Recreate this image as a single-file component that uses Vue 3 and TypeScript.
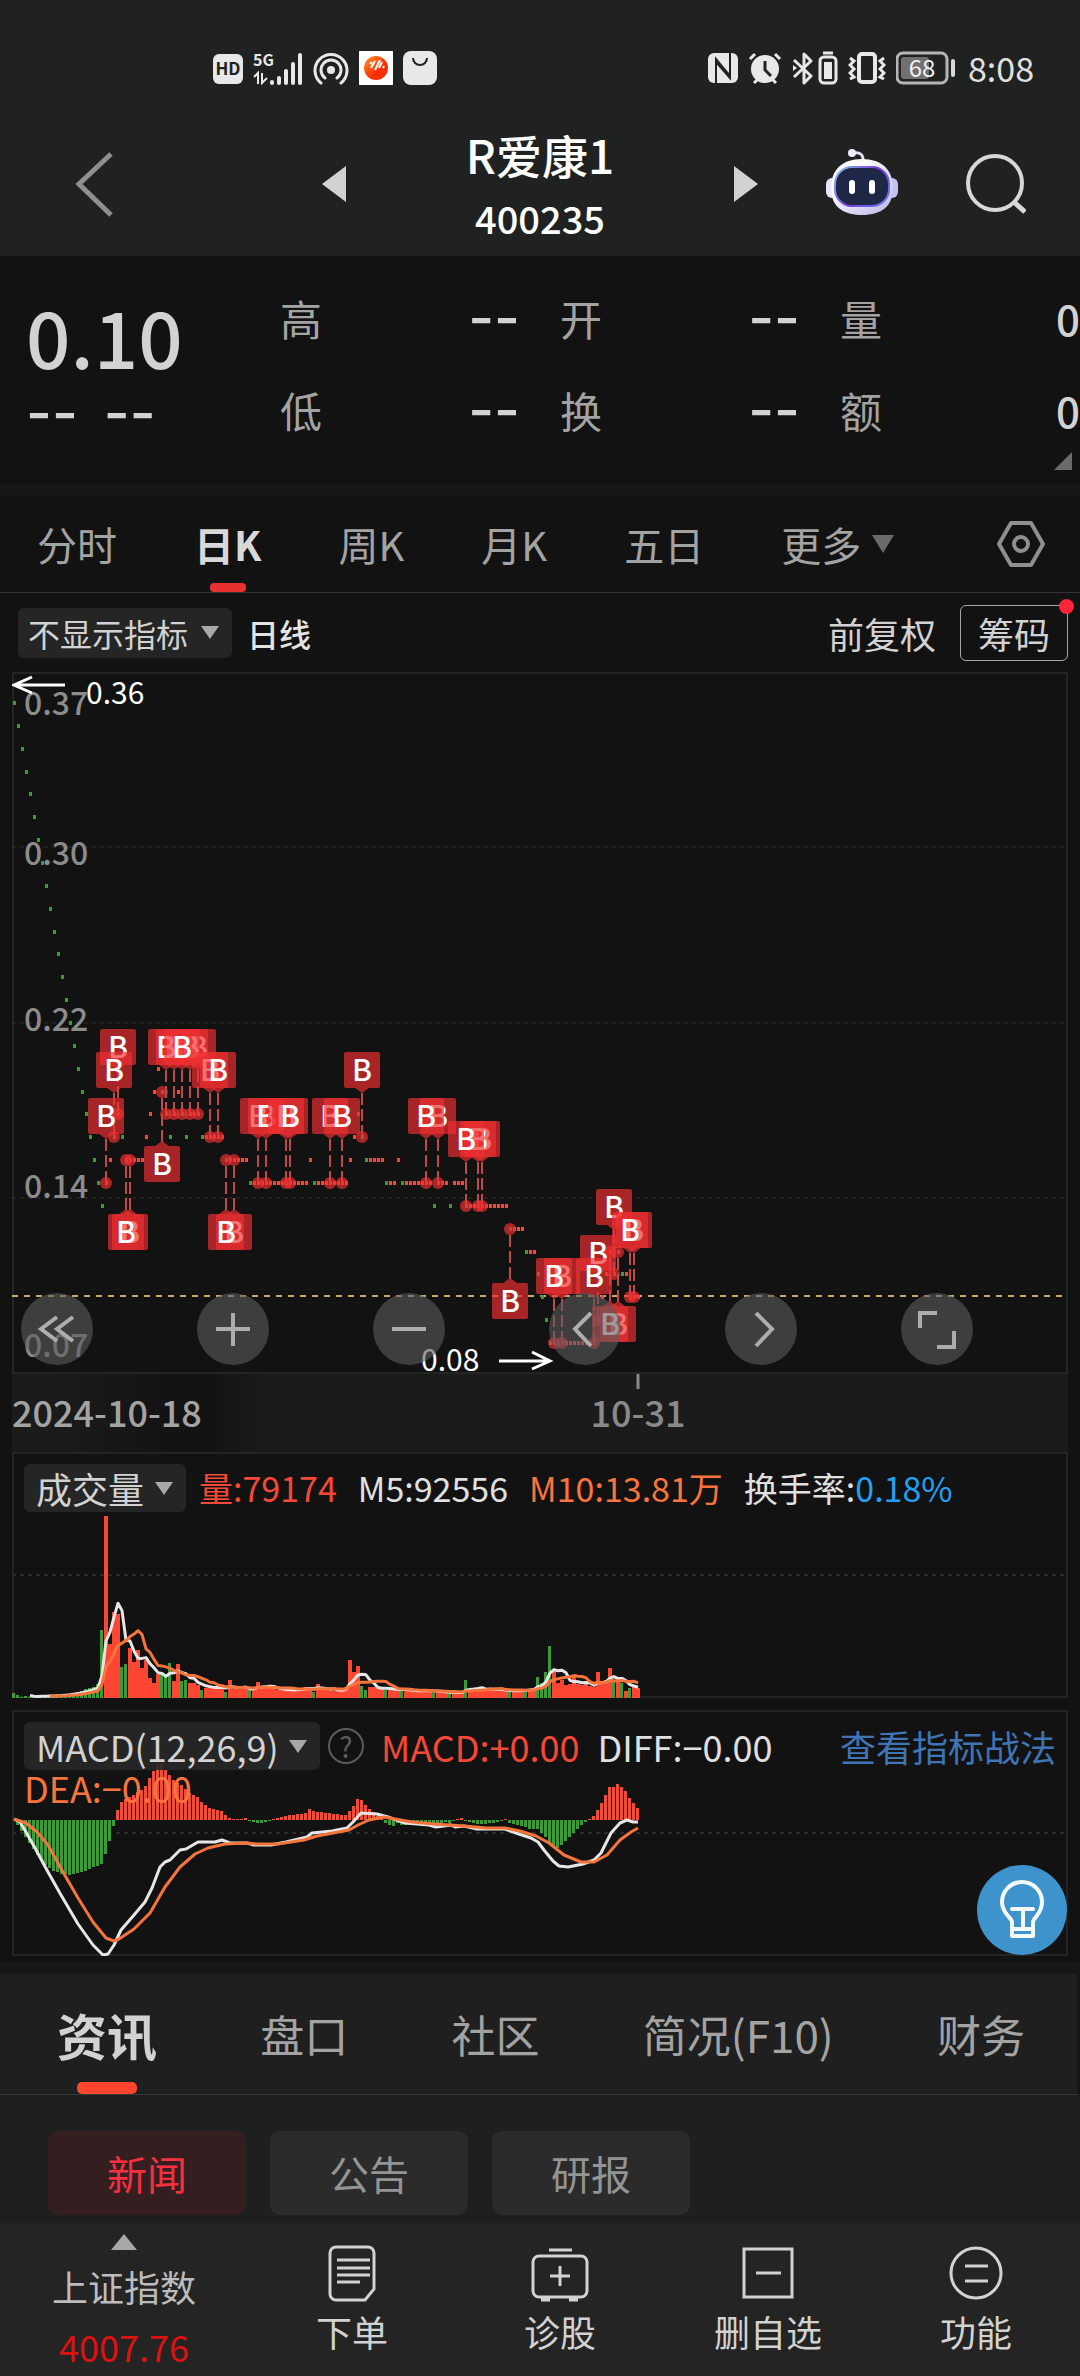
<script setup lang="ts">
import { ref } from 'vue'

interface Marker { index: number; above: boolean }

const quotes = [
  { label: '高', value: '--' }, { label: '开', value: '--' }, { label: '量', value: '0' },
  { label: '低', value: '--' }, { label: '换', value: '--' }, { label: '额', value: '0' },
]
const periods = ['分时', '日K', '周K', '月K', '五日']
const period = ref('日K')
const sections = ['资讯', '盘口', '社区', '简况(F10)', '财务']
const section = ref('资讯')
const feeds = ['新闻', '公告', '研报']
const feed = ref('新闻')

// Closing prices in cents as [price, repeat] runs
const runs: [number, number][] = [
  [36, 1], [35, 1], [34, 1], [33, 1], [32, 1], [31, 1], [30, 1], [29, 1], [28, 1], [27, 1], [26, 1], [25, 1],
  [24, 1], [23, 1], [22, 1], [21, 1], [20, 1], [19, 1], [18, 1], [17, 1], [16, 1], [15, 1], [14, 1], [15, 1],
  [16, 1], [17, 1], [18, 1], [17, 1], [16, 5], [17, 1], [18, 1], [19, 1], [20, 1], [19, 1], [18, 1], [17, 1],
  [18, 1], [19, 1], [18, 1], [17, 1], [18, 3], [17, 6], [16, 6], [15, 15], [16, 1], [15, 9], [16, 1], [17, 1],
  [18, 1], [17, 1], [16, 5], [15, 3], [16, 1], [15, 8], [14, 1], [15, 3], [14, 1], [15, 3], [14, 11], [13, 4],
  [12, 3], [11, 1], [10, 1], [9, 1], [8, 12], [9, 1], [10, 1], [11, 1], [12, 1], [11, 1], [12, 1], [11, 2], [10, 3],
]
const prices: number[] = runs.flatMap(([p, n]) => Array<number>(n).fill(p))
const falling = (i: number) => i === 0 || prices[i] < prices[i - 1]
const tone = (i: number) => (falling(i) ? '#3c9b38' : '#ff4632')
const xAt = (i: number) => 2 + 4 * i
const yAt = (p: number) => Math.round(671 - 22.86 * (p - 8))

// Later entries are painted over earlier ones
const markers: Marker[] = [
  [26, 1], [25, 1], [23, 1], [37, 0], [29, 0], [28, 0],
  [46, 1], [44, 1], [40, 1], [38, 1], [42, 1], [49, 1], [51, 1], [55, 0], [53, 0],
  [61, 1], [63, 1], [68, 1], [69, 1], [79, 1], [82, 1], [87, 1],
  [106, 1], [103, 1], [117, 1], [116, 1], [113, 1], [124, 0],
  [150, 1], [155, 1], [154, 1], [146, 1], [137, 1], [135, 1], [145, 1], [151, 0], [149, 0],
].map(([index, up]) => ({ index, above: up === 1 }))

const volumes = [
  5, 3, 1, 2, 1, 2, 2, 2, 2, 2, 2, 3, 3, 4, 4, 5, 6, 7, 9, 10, 11, 14, 68, 182, 54, 86, 84, 31, 34, 50, 36, 48, 30,
  38, 20, 15, 24, 26, 24, 35, 17, 34, 17, 18, 15, 15, 13, 8, 10, 11, 11, 12, 10, 6, 18, 9, 9, 10, 9, 8, 10, 16, 12,
  11, 10, 9, 8, 8, 8, 8, 8, 9, 10, 11, 10, 6, 14, 9, 8, 8, 7, 8, 8, 11, 38, 26, 32, 12, 8, 11, 11, 10, 9, 8, 9, 9,
  8, 8, 8, 7, 6, 7, 8, 8, 7, 5, 7, 6, 6, 4, 7, 5, 5, 18, 8, 9, 8, 9, 10, 9, 8, 8, 8, 7, 6, 7, 8, 9, 7, 9, 10, 21,
  15, 26, 52, 28, 15, 18, 13, 14, 22, 14, 13, 14, 12, 11, 26, 14, 18, 30, 19, 16, 15, 7, 10, 12, 10,
]
function average(span: number): string {
  const points: string[] = []
  for (let i = span - 1; i < volumes.length; i++) {
    const sum = volumes.slice(i - span + 1, i + 1).reduce((a, b) => a + b, 0)
    points.push(`${xAt(i)},${(246 - sum / span).toFixed(1)}`)
  }
  return points.join(' ')
}
const volumeMa5 = average(5)
const volumeMa10 = average(10)

const macd = [
  0, -5, -11, -17, -23, -29, -35, -40, -45, -48, -51, -52, -54, -54, -55, -54, -53, -52, -51, -49, -47, -46, -44,
  -34, -21, -6, 10, 18, 21, 23, 25, 28, 30, 34, 42, 49, 56, 56, 50, 45, 40, 37, 35, 31, 27, 25, 23, 18, 15, 12, 11,
  10, 9, 5, 2, 1, 1, 1, 2, -1, -2, -3, -3, -2, -1, 1, 2, 3, 4, 5, 5, 6, 6, 7, 11, 9, 8, 8, 7, 7, 6, 6, 5, 5, 9, 14,
  21, 20, 15, 11, 8, 4, 1, -3, -5, -6, -3, -5, -5, -5, -4, -5, -6, -5, -5, -4, -4, -3, -2, -3, -1, 1, 2, -1, -2,
  -3, -4, -4, -4, -3, -3, -2, -1, 1, -3, -4, -5, -6, -7, -9, -9, -9, -13, -17, -23, -27, -28, -25, -21, -17, -13,
  -9, -5, -2, 1, 4, 10, 17, 25, 33, 33, 36, 33, 29, 22, 17, 12,
]
const diffLine =
  '2,109 8,112 14,122 23,138 36,162 49,185 66,214 81,235 91,245 96,244 102,235 109,220 122,205 133,192 140,178 148,157 153,152 158,150 168,140 174,139 186,132 203,132 210,130 218,133 235,133 242,135 259,135 274,132 295,127 300,123 320,121 335,118 341,112 349,103 365,104 376,107 393,113 417,115 424,117 439,115 443,117 452,116 465,119 493,119 504,123 519,128 526,132 532,140 541,151 547,156 556,157 571,154 582,150 589,143 599,123 608,113 615,110 621,112 626,112'
const deaLine =
  '2,109 14,113 25,122 36,135 51,162 66,188 81,212 94,228 102,231 107,229 122,219 138,203 153,177 168,157 183,144 196,138 213,134 235,133 244,134 266,134 292,130 305,126 337,120 346,115 357,110 372,107 383,109 400,112 422,114 452,116 474,118 493,118 508,121 524,126 537,133 552,145 569,152 582,152 595,145 608,130 619,122 626,118'

const gridLabels = [
  { y: 43, text: '0.37' }, { y: 193, text: '0.30' }, { y: 359, text: '0.22' }, { y: 526, text: '0.14' }, { y: 685, text: '0.07' },
]
const tools = [
  { name: '最早', path: 'M36 24 20 36l16 12M52 24 36 36l16 12' },
  { name: '放大', path: 'M36 20v33M19 36h34' },
  { name: '缩小', path: 'M19 36h34' },
  { name: '向左', path: 'M42 20 26 36l16 17' },
  { name: '向右', path: 'M31 20l16 16-16 17' },
  { name: '全屏', path: 'M19 35V20h17M36 54h17V38' },
]
const actions = [
  { name: '下单', path: 'M14 3h32a6 6 0 0 1 6 6v36l-9 11H14a6 6 0 0 1-6-6V9a6 6 0 0 1 6-6ZM15 16h33M15 24h33M15 31h33M15 38h23' },
  { name: '诊股', path: 'M19 6h23M9 12h42a6 6 0 0 1 6 6v29a6 6 0 0 1-6 6H9a6 6 0 0 1-6-6V18a6 6 0 0 1 6-6ZM30 22v20M20 32h20M11 56h9M39 56h9' },
  { name: '删自选', path: 'M6 5h48v48H6ZM18 29h25' },
  { name: '功能', path: 'M30 4a25 25 0 1 1 0 50a25 25 0 1 1 0-50ZM19 22h23M19 37h23' },
]
</script>

<template>
  <div class="page">
    <header class="top">
      <div class="status">
        <div class="status-side">
          <svg width="30" height="34" viewBox="0 0 30 34">
            <rect y="3" width="30" height="30" rx="6" fill="#e8e8e8" />
            <text x="15" y="24" class="hd" text-anchor="middle">HD</text>
          </svg>
          <svg width="50" height="34" viewBox="0 0 50 34">
            <text x="0" y="15" class="net">5G</text>
            <path d="M1 26l4-4v11M9 22v10l5-5" fill="none" stroke="#e8e8e8" stroke-width="2" />
            <path d="M19 31v1M26 27v5M33 20v12M40 13v19M47 4v28" stroke="#e8e8e8" stroke-width="4" stroke-linecap="round" />
          </svg>
          <svg width="36" height="34" viewBox="0 0 36 34" fill="none" stroke="#e8e8e8" stroke-width="3">
            <circle cx="18" cy="19" r="4" fill="#e8e8e8" stroke="none" />
            <path d="M12 27a10 10 0 1 1 12 0M8 32a16 16 0 1 1 20 0" stroke-linecap="round" />
          </svg>
          <svg width="34" height="34" viewBox="0 0 34 34">
            <defs>
              <linearGradient id="sun" x1="0" y1="0" x2="1" y2="1">
                <stop offset="0" stop-color="#ff9a1f" /><stop offset="0.6" stop-color="#fa2d06" />
              </linearGradient>
            </defs>
            <rect width="34" height="34" fill="#fff" />
            <circle cx="17" cy="17" r="12" fill="url(#sun)" />
            <path d="M11 13l2-2M12 17l4-7M16 19l5-10M20 17l3-6M24 17l1-2" stroke="#fff" stroke-width="2" />
          </svg>
          <svg width="34" height="34" viewBox="0 0 34 34">
            <rect width="34" height="34" rx="8" fill="#e8e8e8" />
            <path d="M10 7a7 7 0 0 0 14 0" fill="none" stroke="#202221" stroke-width="2" />
          </svg>
        </div>
        <div class="status-side">
          <svg width="30" height="34" viewBox="0 0 30 34">
            <rect y="2" width="30" height="30" rx="6" fill="#e8e8e8" />
            <path d="M8 32V8l14 17M22 2v25L8 11" fill="none" stroke="#202221" stroke-width="2" />
          </svg>
          <svg width="34" height="34" viewBox="0 0 34 34">
            <circle cx="17" cy="18" r="14" fill="#e8e8e8" />
            <path d="M2 8l5-5M32 8l-5-5M6 32l4-4M28 32l-4-4" stroke="#e8e8e8" stroke-width="3" />
            <path d="M17 10v9l6 6" fill="none" stroke="#202221" stroke-width="3" />
          </svg>
          <svg width="46" height="34" viewBox="0 0 46 34" fill="none" stroke="#e8e8e8" stroke-width="3">
            <path d="M2 9l17 16-7 7V3l7 7L2 26" stroke-linejoin="round" />
            <path d="M1 14l4 3-4 3Z" fill="#e8e8e8" stroke="none" />
            <rect x="28" y="6" width="16" height="26" rx="4" />
            <path d="M31 2h10" />
            <rect x="32" y="11" width="8" height="17" fill="#e8e8e8" stroke="none" />
          </svg>
          <svg width="38" height="34" viewBox="0 0 38 34" fill="none" stroke="#e8e8e8">
            <rect x="11" y="3" width="16" height="28" rx="3" stroke-width="4" />
            <path d="M2 7l4 3-4 4 4 4-4 4 4 4-4 2M36 7l-4 3 4 4-4 4 4 4-4 4 4 2" stroke-width="3" />
          </svg>
          <svg width="60" height="34" viewBox="0 0 60 34">
            <rect x="1" y="2" width="50" height="30" rx="6" fill="none" stroke="#b5b5b5" stroke-width="3" />
            <rect x="5" y="6" width="28" height="22" rx="3" fill="#707070" />
            <path d="M57 10v14" stroke="#d8d8d8" stroke-width="4" stroke-linecap="round" />
            <text x="26" y="26" class="charge" text-anchor="middle">68</text>
          </svg>
          <span class="clock">8:08</span>
        </div>
      </div>
      <div class="bar">
        <div class="bar-left">
          <button aria-label="返回"><svg width="48" height="72" viewBox="0 0 48 72"><path d="M40 6 8 36l32 31" fill="none" stroke="#8f8f8f" stroke-width="5" /></svg></button>
        </div>
        <div class="bar-mid">
          <button aria-label="上一只"><svg width="24" height="36" viewBox="0 0 24 36"><path d="M24 0v36L0 18Z" fill="#d2d2d2" /></svg></button>
          <div class="titles">
            <h1>R爱康1</h1>
            <p>400235</p>
          </div>
          <button aria-label="下一只"><svg width="24" height="36" viewBox="0 0 24 36"><path d="M0 0v36l24-18Z" fill="#d2d2d2" /></svg></button>
        </div>
        <div class="bar-right">
          <button aria-label="智能助手">
            <svg width="72" height="72" viewBox="0 0 72 72">
              <defs>
                <linearGradient id="shell" x1="0" y1="0" x2="1" y2="1">
                  <stop offset="0.3" stop-color="#fbfbff" /><stop offset="1" stop-color="#b9b4e6" />
                </linearGradient>
                <linearGradient id="rim" x1="0" y1="0" x2="1" y2="0.6">
                  <stop offset="0" stop-color="#7fc8f0" /><stop offset="0.6" stop-color="#7a3bd0" /><stop offset="1" stop-color="#6b6bf0" />
                </linearGradient>
              </defs>
              <rect x="0" y="30" width="12" height="20" rx="6" fill="#e6e4fa" />
              <rect x="60" y="30" width="12" height="20" rx="6" fill="#c3bfee" />
              <path d="M27 5q11-2 10 9" fill="none" stroke="#e2e0f7" stroke-width="3" />
              <circle cx="26" cy="5" r="4" fill="#eceafb" />
              <path d="M36 11c20 0 31 11 31 29s-11 27-31 27S5 58 5 40s11-29 31-29Z" fill="url(#shell)" />
              <rect x="9" y="19" width="54" height="39" rx="17" fill="#1f2747" stroke="url(#rim)" stroke-width="2" />
              <path d="M26 35v8M46 35v8" stroke="#fff" stroke-width="6" stroke-linecap="round" />
            </svg>
          </button>
          <button aria-label="搜索">
            <svg width="60" height="60" viewBox="0 0 60 60" fill="none" stroke="#d8d8d8" stroke-width="4">
              <circle cx="29" cy="29" r="27" /><path d="M48 48l11 10" stroke-width="5" />
            </svg>
          </button>
        </div>
      </div>
    </header>

    <section class="quote">
      <div class="price">
        <strong>0.10</strong>
        <p class="dash"><span>--</span><span>--</span></p>
      </div>
      <dl class="cells">
        <div v-for="q in quotes" :key="q.label">
          <dt>{{ q.label }}</dt>
          <dd :class="{ dash: q.value === '--' }">{{ q.value }}</dd>
        </div>
      </dl>
      <svg class="corner" width="18" height="18" viewBox="0 0 18 18"><path d="M18 0v18H0Z" fill="#6a6a6a" /></svg>
    </section>

    <nav class="periods">
      <button v-for="p in periods" :key="p" :class="{ on: p === period }" @click="period = p">{{ p }}</button>
      <button>更多<svg width="24" height="18" viewBox="0 0 24 18"><path d="M1 0h22L12 18Z" fill="#6a6a6a" /></svg></button>
      <button class="gear" aria-label="图表设置">
        <svg width="48" height="48" viewBox="0 0 48 48" fill="none" stroke="#8f8f8f" stroke-width="4">
          <path d="M14 3h20l12 21-12 21H14L2 24Z" stroke-linejoin="round" /><circle cx="24" cy="24" r="7" />
        </svg>
      </button>
    </nav>

    <section class="options">
      <label class="pick small">
        <select aria-label="主图指标"><option>不显示指标</option></select>
        <svg width="18" height="13" viewBox="0 0 18 13"><path d="M0 0h18L9 13Z" fill="#a8a8a8" /></svg>
      </label>
      <span class="line-name">日线</span>
      <button class="adjust">前复权</button>
      <button class="chips-btn">筹码<i></i></button>
    </section>

    <section class="charts">
      <div class="stack">
        <svg class="plot" viewBox="0 0 1056 702">
          <rect x="1" y="1" width="1054" height="700" fill="none" stroke="#242424" stroke-width="2" />
          <path d="M0 175H1056M0 351H1056M0 526H1056" stroke="#2e2e2e" stroke-width="1" stroke-dasharray="4 4" />
          <path d="M0 624H1056" stroke="#c9a868" stroke-width="2" stroke-dasharray="6 6" />
          <text v-for="g in gridLabels" :key="g.text" x="12" :y="g.y" class="axis">{{ g.text }}</text>
          <rect v-for="(p, i) in prices" :key="i" :x="xAt(i) - 1" :y="yAt(p) - 2" width="3" height="4" :fill="tone(i)" />
          <g v-for="m in markers" :key="'s' + m.index" :transform="`translate(${xAt(m.index)} ${yAt(prices[m.index])})`">
            <path :d="m.above ? 'M0 -44V0' : 'M0 50V0'" stroke="#c2494a" stroke-width="2" stroke-dasharray="12 4" />
            <circle r="6" class="flag" />
          </g>
          <g v-for="m in markers" :key="'f' + m.index" :transform="`translate(${xAt(m.index)} ${yAt(prices[m.index]) + (m.above ? -85 : 54)})`">
            <path v-if="m.above" class="flag" d="M-16 0h32a2 2 0 0 1 2 2v32a2 2 0 0 1-2 2H7L0 41l-7-5h-9a2 2 0 0 1-2-2V2a2 2 0 0 1 2-2Z" />
            <path v-else class="flag" d="M-16 0h9l7-5 7 5h9a2 2 0 0 1 2 2v32a2 2 0 0 1-2 2h-32a2 2 0 0 1-2-2V2a2 2 0 0 1 2-2Z" />
            <text y="29" class="b" text-anchor="middle">B</text>
          </g>
          <path d="M53 13H2M20 5 2 13l18 8M487 689h50M520 680l18 9-18 8" fill="none" stroke="#fff" stroke-width="3" />
          <text x="74" y="32" class="extreme">0.36</text>
          <text x="409" y="699" class="extreme">0.08</text>
        </svg>
        <div class="tools">
          <button v-for="t in tools" :key="t.name" :aria-label="t.name">
            <svg width="72" height="72" viewBox="0 0 72 72"><path :d="t.path" fill="none" stroke="#adadad" stroke-width="4" /></svg>
          </button>
        </div>
      </div>

      <svg class="plot dates" viewBox="0 0 1056 78">
        <path d="M626 0v15" stroke="#8a8a8a" stroke-width="3" />
        <text x="0" y="53" class="date first">2024-10-18</text>
        <text x="626" y="53" class="date" text-anchor="middle">10-31</text>
      </svg>

      <div class="stack">
        <svg class="plot" viewBox="0 0 1056 246">
          <rect x="1" y="1" width="1054" height="244" fill="none" stroke="#242424" stroke-width="2" />
          <path d="M0 123H1056" stroke="#2a2a2a" stroke-width="2" stroke-dasharray="4 4" />
          <rect v-for="(v, i) in volumes" :key="i" :x="xAt(i) - 2" :y="246 - v" :width="falling(i) ? 3 : 4" :height="v" :fill="tone(i)" />
          <polyline :points="volumeMa5" class="curve white" />
          <polyline :points="volumeMa10" class="curve orange" />
        </svg>
        <div class="legend">
          <label class="pick">
            <select aria-label="副图一"><option>成交量</option></select>
            <svg width="18" height="13" viewBox="0 0 18 13"><path d="M0 0h18L9 13Z" fill="#a8a8a8" /></svg>
          </label>
          <span class="red">量:79174</span>
          <span>M5:92556</span>
          <span class="amber">M10:13.81万</span>
          <span>换手率:<b>0.18%</b></span>
        </div>
      </div>

      <div class="stack macd">
        <svg class="plot" viewBox="0 0 1056 246">
          <rect x="1" y="1" width="1054" height="244" fill="none" stroke="#242424" stroke-width="2" />
          <path d="M0 123H1056" stroke="#2a2a2a" stroke-width="2" stroke-dasharray="4 4" />
          <rect
            v-for="(v, i) in macd" :key="i" :x="xAt(i) - 2" :y="v > 0 ? 110 - v : 110" width="3" :height="Math.abs(v)"
            :fill="v > 0 ? '#f04c3a' : '#3c9b38'"
          />
          <polyline :points="diffLine" class="curve white" />
          <polyline :points="deaLine" class="curve orange" />
        </svg>
        <div class="legend wrap">
          <label class="pick">
            <select aria-label="副图二"><option>MACD(12,26,9)</option></select>
            <svg width="18" height="13" viewBox="0 0 18 13"><path d="M0 0h18L9 13Z" fill="#a8a8a8" /></svg>
          </label>
          <button class="help" aria-label="指标说明">?</button>
          <span class="red">MACD:+0.00</span>
          <span>DIFF:−0.00</span>
          <a href="#tactics">查看指标战法</a>
          <span class="amber dea">DEA:−0.00</span>
        </div>
        <button class="bulb" aria-label="提示">
          <svg width="90" height="90" viewBox="0 0 90 90" fill="none" stroke="#f2fbff" stroke-width="4" stroke-linejoin="round">
            <path d="M35 71V57c0-4-10-8-10-20a20 20 0 0 1 40 0c0 12-9 16-9 20v14Z" />
            <path d="M35 44h21M46 44v20M35 64h21" stroke-linecap="round" />
          </svg>
        </button>
      </div>
    </section>

    <nav class="sections">
      <button v-for="s in sections" :key="s" :class="{ on: s === section }" @click="section = s">{{ s }}</button>
    </nav>
    <div class="feeds">
      <button v-for="f in feeds" :key="f" :class="{ on: f === feed }" @click="feed = f">{{ f }}</button>
    </div>

    <footer class="dock">
      <button class="index">
        <svg width="26" height="16" viewBox="0 0 26 16"><path d="M13 0l13 16H0Z" fill="#a8a8a8" /></svg>
        <span>上证指数</span>
        <em>4007.76</em>
      </button>
      <button v-for="a in actions" :key="a.name">
        <svg width="60" height="60" viewBox="0 0 60 60"><path :d="a.path" fill="none" stroke="#d2d2d2" stroke-width="3" /></svg>
        <span>{{ a.name }}</span>
      </button>
    </footer>
  </div>
</template>

<style>
html, body { margin: 0; background: #121212; }
</style>

<style scoped>
.page {
  font-family: "Noto Sans CJK SC", "Noto Sans", sans-serif;
  color: #d2d2d2;
  background: #121212;
  line-height: 1;
}
.page * { box-sizing: border-box; }
button, select {
  font: inherit;
  color: inherit;
  background: none;
  border: 0;
  margin: 0;
  padding: 0;
}
h1, p, dl, dd { margin: 0; }
svg { display: block; flex: none; }
svg text { font-family: "Noto Sans CJK SC", "Noto Sans", sans-serif; }

.top { background: #202221; }
.status {
  display: flex;
  justify-content: space-between;
  align-items: center;
  height: 112px;
  padding: 24px 46px 0 213px;
}
.status-side { display: flex; align-items: center; gap: 10px; }
.hd { font-size: 17px; font-weight: 700; fill: #202221; }
.net { font-size: 16px; font-weight: 700; fill: #e8e8e8; }
.charge { font-size: 24px; fill: #f0f0f0; }
.clock { font-size: 34px; line-height: 34px; color: #e0e0e0; margin-left: 2px; }
.bar {
  display: grid;
  grid-template-columns: 1fr 436px 1fr;
  align-items: center;
  height: 144px;
}
.bar-left { padding-left: 71px; }
.bar-mid { display: flex; justify-content: space-between; align-items: center; }
.titles { text-align: center; color: #fff; }
.titles h1 { font-size: 46px; line-height: 68px; font-weight: 500; }
.titles p { font-size: 38px; line-height: 60px; font-weight: 500; }
.bar-right { display: flex; justify-content: flex-end; align-items: center; gap: 68px; padding-right: 54px; }

.quote {
  position: relative;
  display: flex;
  height: 240px;
  padding: 16px 0 0 26px;
  border-bottom: 12px solid #171717;
}
.price { width: 254px; }
.price strong { display: block; font-size: 78px; line-height: 126px; font-weight: 500; }
.price p { display: flex; gap: 26px; line-height: 30px; }
.dash { font-family: Inter, sans-serif; font-size: 56px; font-weight: 500; }
.cells {
  flex: 1;
  display: grid;
  grid-template-columns: repeat(3, 1fr);
  column-gap: 40px;
  grid-auto-rows: 92px;
}
.cells div { display: flex; justify-content: space-between; align-items: center; }
.cells dt { font-size: 42px; color: #a3a3a3; }
.cells dd { font-size: 42px; font-weight: 500; }
.cells dd.dash { font-size: 56px; }
.corner { position: absolute; right: 8px; bottom: 14px; }

.periods {
  display: flex;
  gap: 77px;
  height: 97px;
  padding: 0 35px 0 37px;
  border-bottom: 1px solid #343434;
}
.periods button {
  position: relative;
  display: flex;
  align-items: center;
  gap: 10px;
  font-size: 40px;
  color: #a3a3a3;
  white-space: nowrap;
}
.periods .on { font-weight: 700; color: #d8d8d8; }
.periods .on::after {
  content: "";
  position: absolute;
  left: 50%;
  bottom: 0;
  width: 36px;
  height: 9px;
  margin-left: -18px;
  border-radius: 4px;
  background: #e93030;
}
.periods .gear { margin-left: auto; }

.options {
  display: flex;
  align-items: center;
  height: 79px;
  padding: 0 12px 0 18px;
  font-size: 36px;
}
.pick {
  display: flex;
  align-items: center;
  gap: 10px;
  height: 48px;
  padding: 0 13px 0 12px;
  border-radius: 6px;
  background: rgba(40, 40, 40, 0.9);
  font-size: 36px;
}
.pick.small { height: 50px; gap: 12px; padding-left: 10px; font-size: 32px; }
.pick select { appearance: none; height: 48px; line-height: 48px; outline: 0; }
.line-name { margin-left: 15px; font-size: 32px; font-weight: 500; color: #e4e4e4; }
.adjust { margin-left: auto; }
.chips-btn {
  position: relative;
  width: 108px;
  height: 56px;
  margin-left: 24px;
  border: 1px solid #a6a6a6;
  border-radius: 6px;
}
.chips-btn i {
  position: absolute;
  top: -7px;
  right: -7px;
  width: 15px;
  height: 15px;
  border-radius: 50%;
  background: #ff2436;
}

.charts { padding: 0 12px; }
.stack { display: grid; }
.stack > * { grid-area: 1 / 1; }
.plot { width: 100%; height: auto; }
.axis { font-size: 32px; font-weight: 500; fill: #8c8c8c; }
.extreme { font-size: 30px; fill: #fff; }
.flag { fill: rgba(239, 47, 48, 0.68); }
.b { font-size: 30px; font-weight: 500; fill: #fff; }
.date { font-size: 36px; font-weight: 500; fill: #8a8a8a; }
.date.first { fill: #a3a3a3; }
.dates { background: linear-gradient(90deg, #1b1b1b 4%, #131313 15%, #131313 19%, #1b1b1b 24%); }
.tools {
  align-self: end;
  display: flex;
  justify-content: space-between;
  padding: 0 95px 9px 9px;
}
.tools button { border-radius: 50%; background: rgba(91, 91, 91, 0.6); }
.curve { fill: none; stroke-width: 3; stroke-linejoin: round; }
.white { stroke: #e6e6e6; }
.orange { stroke: #f5743c; }
.legend {
  display: flex;
  align-self: start;
  align-items: center;
  padding: 12px 12px 0;
  font-size: 34px;
  line-height: 34px;
  color: #e0e0e0;
  white-space: nowrap;
}
.legend span { margin-right: 21px; }
.legend .pick { margin-right: 13px; color: #d2d2d2; }
.legend b { font-weight: 400; color: #22a0f2; }
.legend .red { color: #f54836; }
.legend .amber { color: #f8743c; }
.legend a { margin-left: auto; font-size: 36px; color: #3f74b5; text-decoration: none; }
.macd { margin-top: 12px; }
.legend.wrap { flex-wrap: wrap; font-size: 36px; }
.legend.wrap span { margin-right: 18px; }
.legend.wrap .pick { margin-right: 8px; }
.legend.wrap .dea { width: 100%; margin: 0; }
.help {
  width: 36px;
  height: 36px;
  margin-right: 17px;
  border: 2px solid #5c5c5c;
  border-radius: 50%;
  font-size: 28px;
  line-height: 30px;
  color: #5c5c5c;
}
.bulb {
  place-self: end;
  margin: 0 1px 1px 0;
  border-radius: 50%;
  background: #3f93cd;
}

.sections {
  display: flex;
  justify-content: space-between;
  height: 133px;
  margin-top: 6px;
  padding: 0 52px 0 57px;
  border-top: 12px solid #171717;
  border-right: 3px solid #161616;
  border-bottom: 1px solid #383838;
  background: #1f1f1f;
}
.sections button { position: relative; font-size: 44px; color: #a3a3a3; }
.sections .on { font-size: 50px; font-weight: 700; color: #d2d2d2; }
.sections .on::after {
  content: "";
  position: absolute;
  left: 50%;
  bottom: 0;
  width: 60px;
  height: 12px;
  margin-left: -30px;
  border-radius: 5px;
  background: #ff4530;
}
.feeds { display: flex; gap: 24px; padding: 36px 48px 8px; background: #1f1f1f; }
.feeds button {
  width: 198px;
  height: 84px;
  border-radius: 10px;
  font-size: 40px;
  color: #949494;
  background: #2b2b2b;
}
.feeds .on { color: #f5303f; background: #351e20; }

.dock { display: grid; grid-template-columns: 248px repeat(4, 1fr); height: 153px; background: #242424; }
.dock button {
  display: flex;
  flex-direction: column;
  align-items: center;
  padding-top: 21px;
  font-size: 36px;
  line-height: 54px;
}
.dock .index { padding-top: 11px; line-height: 60px; color: #bcbcbc; }
.dock .index span { padding-top: 6px; }
.dock em { font-style: normal; color: #dc1210; }
</style>
